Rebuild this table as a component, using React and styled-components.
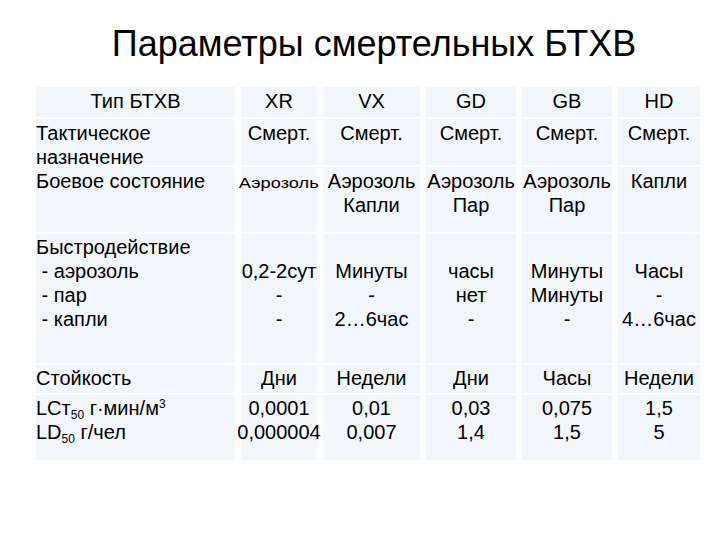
import React from 'react'
import styled, { createGlobalStyle } from 'styled-components'

const GlobalStyle = createGlobalStyle`
  html, body {
    margin: 0;
    padding: 0;
    background: #ffffff;
  }
  body {
    font-family: "Liberation Sans", Arial, sans-serif;
    color: #000;
  }
`

const Slide = styled.div`
  width: 720px;
  height: 540px;
  background: #fff;
  display: flex;
  flex-direction: column;
`

const Title = styled.h1`
  margin: 0;
  height: 87px;
  padding-left: 28px;
  box-sizing: border-box;
  display: flex;
  align-items: center;
  justify-content: center;
  font-weight: normal;
  font-size: 36px;
`

const Table = styled.div`
  margin-left: 36px;
  display: grid;
  grid-template-columns: 199px 76px 97px 90px 90px 82px;
  grid-template-rows: 30px 46px 65px 129px 28px 65px;
  column-gap: 6px;
  row-gap: 2px;
  width: 664px;
`

const Cell = styled.div`
  background: #f3f6fa;
  box-sizing: border-box;
  padding-top: ${p => p.$top || 1}px;
  padding-left: ${p => (p.$align === 'left' ? '0' : '0')};
  text-align: ${p => p.$align || 'center'};
  font-size: 20px;
  line-height: 24px;
  white-space: nowrap;
  display: flex;
  flex-direction: column;
  align-items: ${p => (p.$align === 'left' ? 'flex-start' : 'center')};
`

const Line = styled.span`
  display: block;
  height: 24px;
  line-height: 24px;
`

const SmallWide = styled.span`
  display: inline-block;
  font-size: 14px;
  transform: scaleX(1.3);
`

const Sub = styled.sub`
  font-size: 12px;
  vertical-align: -4px;
  line-height: 0;
`

const Sup = styled.sup`
  font-size: 12px;
  vertical-align: 7px;
  line-height: 0;
`

const agents = ['XR', 'VX', 'GD', 'GB', 'HD']

const rows = [
  {
    label: ['Тактическое', 'назначение'],
    top: 2,
    values: [['Смерт.'], ['Смерт.'], ['Смерт.'], ['Смерт.'], ['Смерт.']],
  },
  {
    label: ['Боевое состояние'],
    top: 2,
    values: [['Аэрозоль'], ['Аэрозоль', 'Капли'], ['Аэрозоль', 'Пар'], ['Аэрозоль', 'Пар'], ['Капли']],
    smallFirst: true,
  },
  {
    label: ['Быстродействие', ' - аэрозоль', ' - пар', ' - капли'],
    top: 0,
    values: [
      ['', '0,2-2сут', '-', '-'],
      ['', 'Минуты', '-', '2…6час'],
      ['', 'часы', 'нет', '-'],
      ['', 'Минуты', 'Минуты', '-'],
      ['', 'Часы', '-', '4…6час'],
    ],
  },
  {
    label: ['Стойкость'],
    top: 0,
    values: [['Дни'], ['Недели'], ['Дни'], ['Часы'], ['Недели']],
  },
]

const toxicity = [
  ['0,0001', '0,000004'],
  ['0,01', '0,007'],
  ['0,03', '1,4'],
  ['0,075', '1,5'],
  ['1,5', '5'],
]

function Lines({ items }) {
  return items.map((t, i) => <Line key={i}>{t === '' ? '\u00a0' : t.replace(/^ /, '\u00a0')}</Line>)
}

export default function App() {
  return (
    <>
      <GlobalStyle />
      <Slide>
        <Title>Параметры смертельных БТХВ</Title>
        <Table>
          <Cell $top={2}>Тип БТХВ</Cell>
          {agents.map(a => (
            <Cell key={a} $top={2}>{a}</Cell>
          ))}

          {rows.map((row, r) => (
            <React.Fragment key={r}>
              <Cell $align="left" $top={row.top}>
                <Lines items={row.label} />
              </Cell>
              {row.values.map((v, i) => (
                <Cell key={i} $top={row.top}>
                  {row.smallFirst && i === 0 ? (
                    <Line><SmallWide>{v[0]}</SmallWide></Line>
                  ) : (
                    <Lines items={v} />
                  )}
                </Cell>
              ))}
            </React.Fragment>
          ))}

          <Cell $align="left" $top={1}>
            <Line>LCт<Sub>50</Sub> г·мин/м<Sup>3</Sup></Line>
            <Line>LD<Sub>50</Sub> г/чел</Line>
          </Cell>
          {toxicity.map((v, i) => (
            <Cell key={i} $top={1}>
              <Lines items={v} />
            </Cell>
          ))}
        </Table>
      </Slide>
    </>
  )
}
